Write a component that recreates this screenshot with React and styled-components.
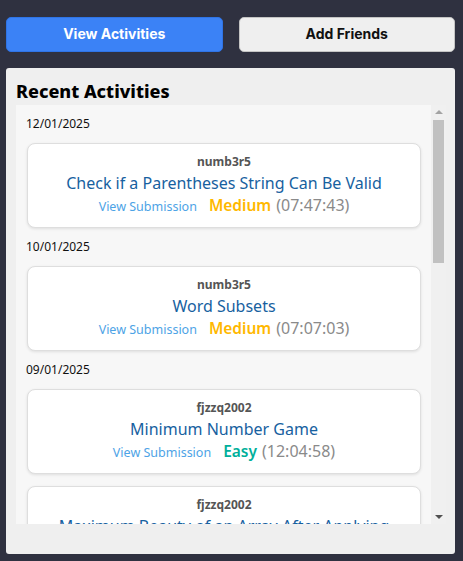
import React from 'react'
import styled, { createGlobalStyle } from 'styled-components'

const GlobalStyle = createGlobalStyle`
  body {
    margin: 0;
    background: #2f3140;
    font-family: "Noto Sans", "Open Sans", sans-serif;
  }
`

const groups = [
  {
    date: '12/01/2025',
    items: [{ user: 'numb3r5', title: 'Check if a Parentheses String Can Be Valid', level: 'Medium', time: '07:47:43' }],
  },
  {
    date: '10/01/2025',
    items: [{ user: 'numb3r5', title: 'Word Subsets', level: 'Medium', time: '07:07:03' }],
  },
  {
    date: '09/01/2025',
    items: [
      { user: 'fjzzq2002', title: 'Minimum Number Game', level: 'Easy', time: '12:04:58' },
      { user: 'fjzzq2002', title: 'Maximum Beauty of an Array After Applying Operation', level: 'Medium', time: '11:22:10' },
    ],
  },
  {
    date: '07/01/2025',
    items: [
      { user: 'numb3r5', title: 'String Matching in an Array', level: 'Easy', time: '09:12:31' },
      { user: 'numb3r5', title: 'Shifting Letters II', level: 'Medium', time: '08:40:12' },
    ],
  },
  {
    date: '05/01/2025',
    items: [{ user: 'fjzzq2002', title: 'Unique Length-3 Palindromic Subsequences', level: 'Medium', time: '21:15:44' }],
  },
]

const levelColors = { Easy: '#00af9b', Medium: '#ffb800', Hard: '#ff2d55' }

function App() {
  return (
    <Page>
      <GlobalStyle />
      <Tabs>
        <TabButton $active>View Activities</TabButton>
        <TabButton>Add Friends</TabButton>
      </Tabs>
      <Panel>
        <Heading>Recent Activities</Heading>
        <ListFrame>
          <Viewport>
            {groups.map(g => (
              <DayGroup key={g.date}>
                <DateLabel>{g.date}</DateLabel>
                {g.items.map((a, i) => (
                  <Card key={i}>
                    <User>{a.user}</User>
                    <Title>{a.title}</Title>
                    <Meta>
                      <SubmissionLink>View Submission</SubmissionLink>
                      <Level $color={levelColors[a.level]}>{a.level}</Level>
                      <Time>({a.time})</Time>
                    </Meta>
                  </Card>
                ))}
              </DayGroup>
            ))}
          </Viewport>
          <ScrollBar>
            <ArrowButton><Arrow $up /></ArrowButton>
            <Track>
              <Thumb />
            </Track>
            <ArrowButton><Arrow /></ArrowButton>
          </ScrollBar>
        </ListFrame>
      </Panel>
    </Page>
  )
}

const Page = styled.div`
  width: 463px;
  height: 561px;
  padding: 17px 8px 8px 6px;
  box-sizing: border-box;
  display: flex;
  flex-direction: column;
  gap: 16px;
`

const Tabs = styled.div`
  display: grid;
  grid-template-columns: 1fr 1fr;
  gap: 16px;
`

const TabButton = styled.button`
  height: 35px;
  border-radius: 5px;
  font-family: Inter, sans-serif;
  font-weight: 700;
  font-size: 14px;
  padding: 0 0 2px;
  cursor: pointer;
  color: ${p => (p.$active ? '#ffffff' : '#111111')};
  background: ${p => (p.$active ? '#3b82f6' : '#efefef')};
  border: 1px solid ${p => (p.$active ? '#2f74e6' : '#c4c4c4')};
`

const Panel = styled.div`
  background: #efefef;
  border-radius: 3px;
  padding: 13px 9px 30px 10px;
  display: flex;
  flex-direction: column;
  height: 486px;
  box-sizing: border-box;
`

const Heading = styled.h2`
  margin: 0 0 4px;
  font-size: 18px;
  font-weight: 800;
  color: #000;
  line-height: 20px;
`

const ListFrame = styled.div`
  flex: 1;
  min-height: 0;
  display: flex;
`

const Viewport = styled.div`
  flex: 1;
  overflow: hidden;
  background: #f7f7f7;
  padding: 0 10px;
`

const ScrollBar = styled.div`
  width: 15px;
  flex-shrink: 0;
  background: #f0f0f0;
  display: flex;
  flex-direction: column;
`

const ArrowButton = styled.div`
  height: 15px;
  display: flex;
  align-items: center;
  justify-content: center;
`

const Arrow = styled.span`
  width: 0;
  height: 0;
  border-left: 4px solid transparent;
  border-right: 4px solid transparent;
  ${p =>
    p.$up
      ? 'border-bottom: 4px solid #a3a3a3; margin-top: -1px;'
      : 'border-top: 4px solid #505050; margin-top: 1px;'}
`

const Track = styled.div`
  flex: 1;
  padding: 0 2px;
`

const Thumb = styled.div`
  height: 143px;
  background: #c1c1c1;
`

const DayGroup = styled.div`
  padding-top: 11px;
  display: flex;
  flex-direction: column;
  gap: 12px;
`

const DateLabel = styled.div`
  font-size: 12px;
  color: #111;
  line-height: 16px;
  margin-bottom: -1px;
`

const Card = styled.div`
  background: #fff;
  border: 1px solid #dedede;
  border-radius: 8px;
  box-shadow: 0 1px 3px rgba(0, 0, 0, 0.1);
  margin-left: 1px;
  padding: 10px 8px 9px;
  display: flex;
  flex-direction: column;
  align-items: center;
  text-align: center;
`

const User = styled.div`
  font-size: 12px;
  font-weight: 700;
  color: #555;
  line-height: 16px;
`

const Title = styled.div`
  font-size: 16px;
  color: #17619f;
  line-height: 22px;
  margin-top: 2px;
`

const Meta = styled.div`
  display: flex;
  align-items: baseline;
  gap: 12px;
  line-height: 22px;
`

const SubmissionLink = styled.a`
  font-size: 12.5px;
  color: #4da3e6;
  cursor: pointer;
`

const Level = styled.span`
  font-size: 15.5px;
  font-weight: 600;
  color: ${p => p.$color};
  margin-right: -7px;
`

const Time = styled.span`
  font-size: 16px;
  color: #8a8a8a;
`

export default App
